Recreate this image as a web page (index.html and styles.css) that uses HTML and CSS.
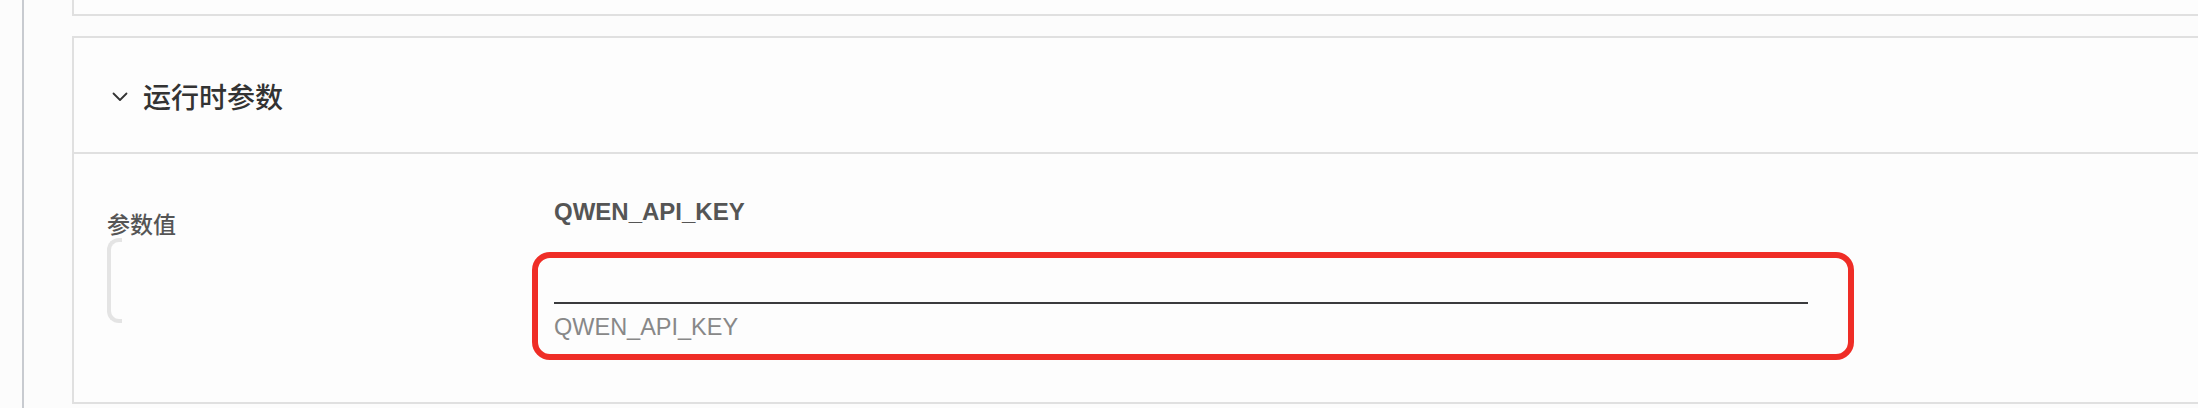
FILE: index.html
```html
<!DOCTYPE html>
<html lang="zh-CN">
<head>
<meta charset="utf-8">
<title>运行时参数</title>
<link rel="stylesheet" href="styles.css">
</head>
<body>
<div class="page">
  <div class="rail">
    <div class="card card-prev"></div>
    <section class="card card-runtime">
      <header class="card-head">
        <svg class="chevron" width="16" height="10" viewBox="0 0 16 10" aria-hidden="true">
          <polyline points="1.5,1.5 8,8 14.5,1.5" fill="none" stroke="#333" stroke-width="1.8" stroke-linecap="round" stroke-linejoin="round"/>
        </svg>
        <h2 class="card-title">运行时参数</h2>
      </header>
      <div class="params">
        <div class="label-col">
          <div class="label">参数值</div>
          <div class="bracket"></div>
        </div>
        <div class="value-col">
          <div class="param-name">QWEN_API_KEY</div>
          <div class="highlight">
            <div class="input-line"></div>
            <div class="hint">QWEN_API_KEY</div>
          </div>
        </div>
      </div>
    </section>
  </div>
</div>
</body>
</html>
```

FILE: styles.css
```css
html, body {
  margin: 0;
  padding: 0;
  background: #fcfcfc;
  overflow: hidden;
}

body {
  width: 2198px;
  height: 408px;
  font-family: "Liberation Sans", "Noto Sans CJK SC", sans-serif;
  color: #333;
}

.page {
  height: 408px;
  padding-left: 22px;
}

.rail {
  height: 408px;
  border-left: 2px solid #c8cbd0;
  padding-left: 48px;
  margin-right: -40px;
}

.card {
  border: 2px solid #e0e0e0;
  background: #fdfdfd;
}

.card-prev {
  height: 14px;
  border-top: none;
  margin-bottom: 20px;
}

.card-head {
  height: 114px;
  display: flex;
  align-items: center;
  padding-left: 38px;
  gap: 15px;
  border-bottom: 2px solid #e0e0e0;
}

.chevron {
  display: block;
  margin-top: 3px;
}

.card-title {
  margin: 0;
  font-family: "Noto Sans CJK SC", sans-serif;
  font-weight: 500;
  font-size: 28px;
  line-height: 36px;
  color: #333;
  margin-top: 2px;
}

.params {
  display: grid;
  grid-template-columns: 425px 1fr;
  padding: 42px 0 42px 33px;
}

.label-col {
  padding-top: 13px;
}

.label {
  font-family: "Noto Sans CJK SC", sans-serif;
  font-weight: 500;
  font-size: 23px;
  line-height: 29px;
  color: #555;
}

.bracket {
  width: 11px;
  height: 77px;
  border: 4px solid #e4e4e4;
  border-right: none;
  border-radius: 12px 0 0 12px;
}

.param-name {
  padding-left: 22px;
  font-size: 24px;
  line-height: 32px;
  font-weight: 700;
  color: #555;
}

.highlight {
  box-sizing: border-box;
  width: 1322px;
  margin-top: 24px;
  border: 6px solid #ef2d26;
  border-radius: 18px;
  padding: 0 40px 13px 16px;
}

.input-line {
  height: 44px;
  border-bottom: 2px solid #3a3b3d;
}

.hint {
  margin-top: 9px;
  font-size: 23.5px;
  line-height: 28px;
  color: #888;
}
```
